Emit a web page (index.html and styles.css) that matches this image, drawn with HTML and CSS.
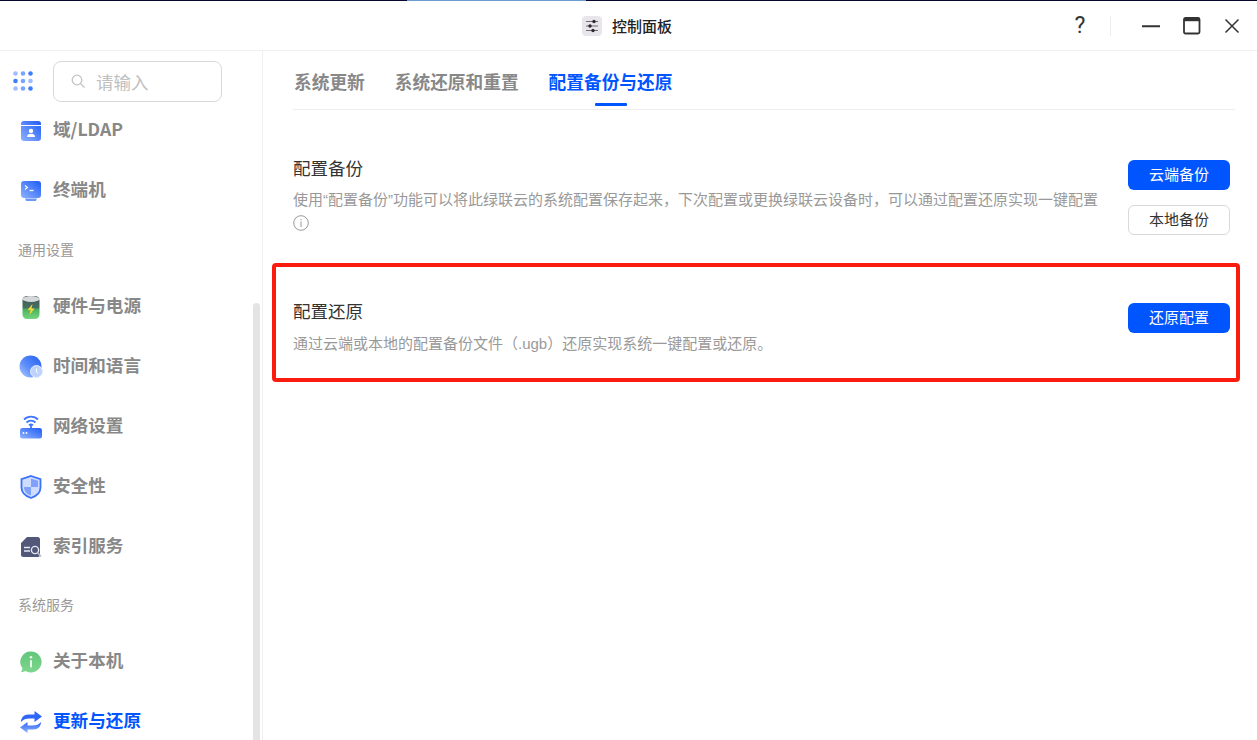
FILE: index.html
```html
<!DOCTYPE html>
<html lang="zh-CN">
<head>
<meta charset="utf-8">
<title>控制面板</title>
<link rel="stylesheet" href="styles.css">
</head>
<body>
<svg class="defs" width="0" height="0" aria-hidden="true">
  <defs>
    <linearGradient id="gBlue" x1="1" y1="0" x2="0" y2="1"><stop offset="0" stop-color="#1f5cf5"/><stop offset="1" stop-color="#8fb2ff"/></linearGradient>
    <linearGradient id="gBlueV" x1="0" y1="0" x2="0" y2="1"><stop offset="0" stop-color="#2f66f7"/><stop offset="1" stop-color="#8fb2ff"/></linearGradient>
    <linearGradient id="gBat" x1="0" y1="0" x2="0" y2="1"><stop offset="0" stop-color="#45505e"/><stop offset=".5" stop-color="#45705f"/><stop offset=".6" stop-color="#4fb460"/><stop offset="1" stop-color="#74d77f"/></linearGradient>
    <linearGradient id="gGlobe" x1="1" y1="0" x2="0" y2="1"><stop offset="0" stop-color="#1f5df0"/><stop offset=".6" stop-color="#5f90fa"/><stop offset="1" stop-color="#b8d0ff"/></linearGradient>
    <linearGradient id="gGreen" x1="0" y1="0" x2="0" y2="1"><stop offset="0" stop-color="#62c67a"/><stop offset="1" stop-color="#7fd68e"/></linearGradient>
  </defs>
</svg>
<div class="window">
  <div class="topline"><span class="topline-blue"></span></div>
  <header class="titlebar">
    <div class="title">
      <svg class="title-icon" width="20" height="20" viewBox="0 0 20 20">
        <rect width="20" height="20" rx="4" fill="#e8e6ea"/>
        <path d="M4 5.500h12M4 10h12M4 14.500h12" stroke="#6f6c74" stroke-width="1.200"/>
        <circle cx="12" cy="5.500" r="1.700" fill="#2c2a30"/><circle cx="8" cy="10" r="1.700" fill="#2c2a30"/><circle cx="11" cy="14.500" r="1.700" fill="#2c2a30"/>
      </svg>
      <span>控制面板</span>
    </div>
    <div class="controls">
      <span class="help">?</span>
      <span class="divider"></span>
      <svg class="ctl-min" width="18" height="3" viewBox="0 0 18 3"><path d="M0 1.250h18" stroke="#333" stroke-width="2"/></svg>
      <svg class="ctl-max" width="18" height="18" viewBox="0 0 18 18"><rect x="1" y="1" width="15.500" height="15.500" rx="1.500" fill="none" stroke="#333" stroke-width="1.800"/><path d="M1 3h15.500" stroke="#333" stroke-width="2.400"/></svg>
      <svg class="ctl-close" width="16" height="16" viewBox="0 0 16 16"><path d="M1.500 1.500l13 13M14.500 1.500l-13 13" stroke="#333" stroke-width="1.500"/></svg>
    </div>
  </header>
  <div class="body">
    <aside class="sidebar">
      <div class="search-row">
        <svg class="apps" width="20" height="20" viewBox="0 0 20 20">
          <g fill="#9dbdff"><circle cx="2.500" cy="2.500" r="2.300"/><circle cx="10" cy="2.500" r="2.300" fill="#7aa5ff"/><circle cx="17.500" cy="2.500" r="2.300" fill="#3f7dff"/><circle cx="2.500" cy="10" r="2.300" fill="#3f7dff"/><circle cx="10" cy="10" r="2.300" fill="#7aa5ff"/><circle cx="17.500" cy="10" r="2.300"/><circle cx="2.500" cy="17.500" r="2.300"/><circle cx="10" cy="17.500" r="2.300" fill="#7aa5ff"/><circle cx="17.500" cy="17.500" r="2.300" fill="#3f7dff"/></g>
        </svg>
        <div class="search">
          <svg width="15" height="15" viewBox="0 0 15 15"><circle cx="6" cy="6" r="4.800" fill="none" stroke="#c4c4c4" stroke-width="1.300"/><path d="M9.500 9.500l4 4" stroke="#c4c4c4" stroke-width="1.300"/></svg>
          <span>请输入</span>
        </div>
      </div>
      <nav class="nav">
        <a class="item">
          <svg width="22" height="22" viewBox="0 0 22 22"><rect x="1" y="1" width="20" height="20" rx="3" fill="url(#gBlue)"/><path d="M1 5.500h20" stroke="#fff" stroke-width="1"/><circle cx="11" cy="11" r="2.200" fill="#fff"/><path d="M7 17c0-2.500 1.500-3 4-3s4 .5 4 3z" fill="#fff"/></svg>
          <span>域/LDAP</span>
        </a>
        <a class="item">
          <svg width="22" height="22" viewBox="0 0 22 22"><rect x="1" y="1" width="20" height="17" rx="3" fill="url(#gBlue)"/><path d="M5 18.500h12l-1 2.500H6z" fill="#6f98fb"/><path d="M5 5.500l2.500 2-2.500 2" fill="none" stroke="#fff" stroke-width="1.100"/><path d="M9.500 10.500h4" stroke="#fff" stroke-width="1.300"/></svg>
          <span>终端机</span>
        </a>
        <div class="group">通用设置</div>
        <a class="item">
          <svg width="22" height="24" viewBox="0 0 22 24"><rect x="2.500" y="1" width="17" height="23" rx="4.500" fill="url(#gBat)"/><ellipse cx="11" cy="4" rx="8.500" ry="3" fill="#d5d8d8"/><path d="M12.500 9l-5 6h3L9.500 20l5-6.500h-3z" fill="#f4d63a"/></svg>
          <span>硬件与电源</span>
        </a>
        <a class="item">
          <svg class="ic-wide" width="24" height="24" viewBox="0 0 24 24"><circle cx="11.500" cy="11.500" r="11" fill="url(#gGlobe)"/><circle cx="17.500" cy="16.500" r="6" fill="#bdd3fb" stroke="#e4edff"/><path d="M17.500 13.500v3.300l1.800 1.500" fill="none" stroke="#fff" stroke-width="1"/></svg>
          <span>时间和语言</span>
        </a>
        <a class="item">
          <svg class="ic-wide" width="24" height="24" viewBox="0 0 24 24"><path d="M5 4.500c3.800-3.800 10.200-3.800 14 0M7.500 7.500c2.500-2.400 6.500-2.400 9 0M10 10.300c1.200-1.100 2.800-1.100 4 0" fill="none" stroke="#3f76fb" stroke-width="1.800"/><path d="M12 10v4" stroke="#3f76fb" stroke-width="1.800"/><rect x="1" y="13" width="22" height="10.500" rx="2.500" fill="url(#gBlue)"/><circle cx="4.500" cy="18" r=".9" fill="#fff"/><circle cx="7.500" cy="18" r=".9" fill="#fff"/></svg>
          <span>网络设置</span>
        </a>
        <a class="item">
          <svg width="22" height="24" viewBox="0 0 22 24"><path d="M11 1l9.500 3.200v8.300c0 5-4.500 8.800-9.500 10.500C6 21.300 1.500 17.500 1.500 12.500V4.200z" fill="#cfdcff" stroke="#3a72fb" stroke-width="1.800"/><path d="M11 3.500v8.500H4c0 5 3.500 7.500 7 8.500V12h7V5.700z" fill="#7ea2fb"/></svg>
          <span>安全性</span>
        </a>
        <a class="item">
          <svg width="22" height="22" viewBox="0 0 22 22"><path d="M7 1h10.500a2.500 2.500 0 0 1 2.500 2.500V19a2 2 0 0 1-2 2H3.500a2.500 2.500 0 0 1-2.500-2.500V7z" fill="#51587a"/><path d="M4 11.500h6M4 15h6" stroke="#e6e8f2" stroke-width="1.300"/><circle cx="15" cy="14" r="3.600" fill="#51587a" stroke="#e6e8f2" stroke-width="1.400"/><path d="M17.500 16.500l3.500 4" stroke="#b7bccf" stroke-width="1.700"/></svg>
          <span>索引服务</span>
        </a>
        <div class="group group-second">系统服务</div>
        <a class="item">
          <svg width="22" height="22" viewBox="0 0 22 22"><path d="M11 .5a10.500 10.500 0 1 1-5.500 19.400c-1.300.8-2.800 1-4.500 1 1-1 1.300-2.200 1.400-3.600A10.500 10.500 0 0 1 11 .5z" fill="url(#gGreen)"/><rect x="10" y="9" width="2" height="7.500" rx=".8" fill="#e8f8ea"/><circle cx="11" cy="6.300" r="1.300" fill="#e8f8ea"/></svg>
          <span>关于本机</span>
        </a>
        <a class="item active">
          <svg width="22" height="22" viewBox="0 0 22 22"><path d="M1 11C1 6.500 4 3.500 8.500 3.500h6V0L22 5.500 14.500 11V7.500h-5C6 7.500 3 8.500 1 11z" fill="#2f66f7"/><path d="M21 11c0 4.500-3 7.500-7.500 7.500h-6V22L0 16.500 7.500 11v3.500h5c3.500 0 6.500-1 8.500-3.500z" fill="url(#gBlueV)"/></svg>
          <span>更新与还原</span>
        </a>
      </nav>
      <div class="scrollbar"></div>
    </aside>
    <main class="main">
      <div class="tabs">
        <a class="tab">系统更新</a>
        <a class="tab">系统还原和重置</a>
        <a class="tab tab-active">配置备份与还原</a>
      </div>
      <section class="row row-backup">
        <div class="row-text">
          <h2>配置备份</h2>
          <p>使用“配置备份”功能可以将此绿联云的系统配置保存起来，下次配置或更换绿联云设备时，可以通过配置还原实现一键配置
            <svg class="info" width="16" height="16" viewBox="0 0 16 16"><circle cx="8" cy="8" r="7.300" fill="none" stroke="#999" stroke-width="1"/><rect x="7.500" y="6.500" width="1" height="5.500" fill="#999"/><rect x="7.500" y="4" width="1" height="1.300" fill="#999"/></svg>
          </p>
        </div>
        <div class="row-actions">
          <button class="btn btn-primary">云端备份</button>
          <button class="btn btn-plain">本地备份</button>
        </div>
      </section>
      <section class="row row-restore">
        <div class="row-text">
          <h2>配置还原</h2>
          <p>通过云端或本地的配置备份文件（.ugb）还原实现系统一键配置或还原。</p>
        </div>
        <div class="row-actions">
          <button class="btn btn-primary">还原配置</button>
        </div>
      </section>
    </main>
  </div>
</div>
</body>
</html>
```
FILE: styles.css
```css
* { box-sizing: border-box; }
html, body { margin: 0; height: 100%; }
body {
  background: #fff;
  color: #333;
  font-family: "Noto Sans CJK SC", "Noto Sans", "Liberation Sans", sans-serif;
  overflow: hidden;
}
.defs { position: absolute; }
.window { height: 740px; display: flex; flex-direction: column; overflow: hidden; }
.topline { height: 1px; background: #07072b; padding-left: 407px; flex: none; }
.topline-blue { display: block; width: 179px; height: 1px; background: #6c9bd0; }
.titlebar {
  height: 50px; flex: none; position: relative;
  display: flex; align-items: center; justify-content: flex-end;
  border-bottom: 1px solid #f0f0f0;
}
.title {
  position: absolute; left: 582px; top: 15px;
  display: flex; align-items: center; gap: 10px;
  font-size: 15px; line-height: 20px; font-weight: 500; color: #222;
}
.title-icon { display: block; }
.controls { display: flex; align-items: center; padding-right: 17px; }
.help { font-size: 23px; font-weight: 400; line-height: 24px; width: 14px; text-align: center; color: #333; font-family: Roboto, "Liberation Sans", sans-serif; }
.divider { width: 1px; height: 20px; background: #eee; margin: 0 31px 0 23px; }
.ctl-min { margin-right: 23px; margin-top: 2px; }
.ctl-max { margin-right: 23px; }
.body { flex: 1; display: flex; min-height: 0; }
.sidebar {
  width: 263px; flex: none; position: relative; overflow: hidden;
  border-right: 1px solid #f0f0f0;
}
.search-row { height: 50px; padding: 10px 0 0 13px; display: flex; align-items: flex-start; position: relative; z-index: 1; }
.apps { margin: 10px 20px 0 0; flex: none; }
.search {
  width: 169px; height: 41px; flex: none;
  border: 1px solid #d9d9d9; border-radius: 8px; background: #fff;
  display: flex; align-items: center; padding-left: 17px; gap: 10px;
  font-size: 17.500px; color: #c0c0c0;
}
.nav { padding: 0 0 0 20px; }
.item {
  height: 60px; display: flex; align-items: center; gap: 11px;
  font-size: 17.600px; font-weight: 700; color: #888;
}
.item span { padding-bottom: 5px; }
.item svg { flex: none; display: block; }
.item svg.ic-wide { margin: 0 -1px; }
.item.active { color: #0055ff; }
.group { height: 56px; margin-left: -2px; padding-top: 18px; font-size: 14px; line-height: 20px; color: #999; }
.group-second { height: 55px; padding-top: 17px; }
.scrollbar {
  position: absolute; left: 253px; top: 252px; width: 7px; bottom: 0;
  background: #e4e4e4; border-radius: 4px 4px 0 0;
}
.main { flex: 1; min-width: 0; padding: 0 22px 0 30px; }
.tabs {
  height: 59px; display: flex; gap: 30px; align-items: center;
  border-bottom: 1px solid #eee; padding: 0 0 0 1px;
}
.tab { position: relative; font-size: 17.700px; font-weight: 700; line-height: 26px; color: #888; margin-top: 2px; }
.tab-active { color: #0055ff; }
.tab-active::after {
  content: ""; position: absolute; left: 46px; top: 35px;
  width: 32px; height: 3px; background: #0055ff; border-radius: 1px;
}
.row { display: flex; justify-content: space-between; align-items: flex-start; padding-right: 5px; }
.row-text h2 { margin: 0; font-size: 17.500px; font-weight: 400; line-height: 26px; color: #333; }
.row-text p {
  margin: 0; font-size: 15px; color: #999; line-height: 25px; width: 815px;
  font-family: "Liberation Sans", "Noto Sans CJK SC", sans-serif;
}
.row-backup { padding-top: 45px; height: 153px; }
.row-backup p { margin-top: 6px; }
.row-restore {
  position: relative;
  height: 119px; margin: 0 -5px 0 -21px; padding: 35px 10px 0 21px;
}
.row-restore::after {
  content: ""; position: absolute; inset: 0;
  border: 4px solid #fb1c10; border-radius: 4px; pointer-events: none;
}
.row-restore p { margin-top: 7px; }
.row-actions { display: flex; flex-direction: column; gap: 15px; flex: none; margin-top: 5px; }
.btn {
  width: 102px; height: 30px; padding: 0 0 2px;
  font: inherit; font-size: 15px; line-height: 26px; border-radius: 6px;
}
.btn-primary { background: #0055ff; color: #fff; border: 0; }
.btn-plain { background: #fff; color: #333; border: 1px solid #d9d9d9; }
.info { display: block; margin-top: 3px; }
```
